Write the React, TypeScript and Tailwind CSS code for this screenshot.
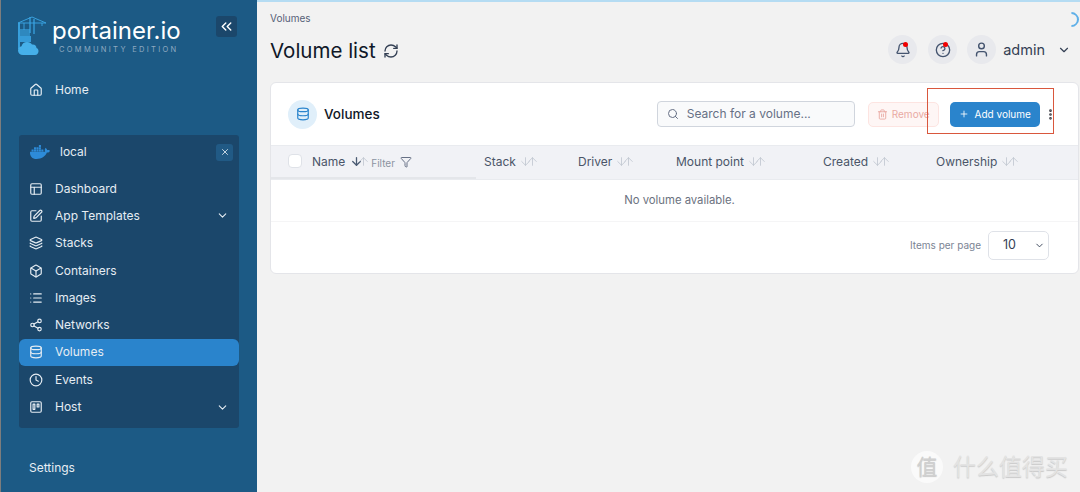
import React from "react";
import {
  ArrowDown,
  ArrowUp,
  Bell,
  Box,
  ChevronDown,
  ChevronsLeft,
  CircleHelp,
  Clock,
  Database,
  Filter,
  Home,
  Layers,
  List,
  MoreVertical,
  PanelsTopLeft,
  Plus,
  RefreshCw,
  Search,
  Share2,
  SquarePen,
  Trash2,
  Trello,
  User,
  X,
} from "lucide-react";
import { FaDocker } from "react-icons/fa";

const navItems = [
  { label: "Dashboard", icon: PanelsTopLeft },
  { label: "App Templates", icon: SquarePen, more: true },
  { label: "Stacks", icon: Layers },
  { label: "Containers", icon: Box },
  { label: "Images", icon: List },
  { label: "Networks", icon: Share2 },
  { label: "Volumes", icon: Database, active: true },
  { label: "Events", icon: Clock },
  { label: "Host", icon: Trello, more: true },
];

const columns = [
  { label: "Stack", width: "w-[94px]" },
  { label: "Driver", width: "w-[98px]" },
  { label: "Mount point", width: "w-[147px]" },
  { label: "Created", width: "w-[113px]" },
  { label: "Ownership", width: "w-[120px]" },
];

const Logo = () => (
  <svg width="34" height="40" viewBox="0 0 34 40" fill="none" className="shrink-0">
    <g stroke="#3ba7e6" strokeWidth="0.900">
      <path d="M0 7H28" />
      <path d="M14 1 0 7M14 1l14 6" />
      <path d="M12 1v16M16 3v15" strokeWidth="1.200" />
      <path d="M1 7v26" strokeWidth="1.800" />
      <path d="M6 7v7M24 7v3" />
    </g>
    <g fill="#3ba7e6">
      <rect x="2" y="13" width="10" height="7" opacity="0.6" />
      <rect x="2" y="20" width="11" height="6" opacity="0.85" />
    </g>
    <path
      d="M5 39c-3 0-5-2-5-4.500 0-2 1.500-3.800 3.500-4.200C4 27.500 6.500 26 9 26c2.500 0 4 1 5 2.500 2.700-.5 4.500 1.500 4.500 3.500 1.500.3 2 1.800 2 3.200 0 1.800-1.200 3.800-3.500 3.800Z"
      fill="#46b0ea"
    />
  </svg>
);

const SortArrows = ({ dark }: { dark?: boolean }) => (
  <span className={`flex items-center ${dark ? "ml-[5px]" : "ml-[3px]"}`}>
    <ArrowDown
      size={13}
      strokeWidth={dark ? 2.400 : 1.500}
      className={dark ? "-mr-[6px] text-[#4b5b73]" : "-mr-[6px] text-[#bfc5cf]"}
    />
    <ArrowUp size={13} strokeWidth={1.500} className="text-[#bfc5cf]" />
  </span>
);

const RoundIcon = ({ children, dot }: { children: React.ReactNode; dot?: boolean }) => (
  <div className="relative flex h-[29px] w-[29px] items-center justify-center rounded-full bg-[#e8e9ed] text-[#44546f]">
    {children}
    {dot && <span className="absolute right-[9px] top-[7px] h-[5px] w-[5px] rounded-full bg-[#f00000]" />}
  </div>
);

const Sidebar = () => (
  <aside className="flex h-[492px] w-[257px] shrink-0 flex-col border-l border-[#7d7d7d] bg-[#1c5a85] text-[#e6edf3]">
    <div className="flex h-[56px] items-start pl-[17px] pt-[16px]">
      <Logo />
      <div className="flex w-[130px] flex-col items-start">
        <span className="text-[24px] font-normal leading-[30px] text-white">portainer.io</span>
        <span className="ml-[7px] whitespace-nowrap text-[7.500px] leading-[8px] tracking-[2.300px] text-[#8ea9c0]">
          COMMUNITY EDITION
        </span>
      </div>
      <button className="ml-[34px] flex h-[21px] w-[21px] items-center justify-center rounded-[3px] bg-[#1b476b] text-white">
        <ChevronsLeft size={17} strokeWidth={2} />
      </button>
    </div>

    <div className="mt-[20px] flex h-[27px] items-center pl-[28px] text-[12px]">
      <Home size={14} className="mr-[12px]" />
      Home
    </div>

    <div className="ml-[18px] mt-[32px] w-[220px] rounded-[3px] bg-[#1b476b] pb-[7px]">
      <div className="flex h-[34px] items-center pl-[11px] pr-[6px] text-[12px]">
        <FaDocker size={20} className="text-[#2d8bd8]" />
        <span className="ml-[10px]">local</span>
        <span className="ml-auto flex h-[17px] w-[17px] items-center justify-center rounded-[3px] bg-[#215a85]">
          <X size={10} />
        </span>
      </div>
      <div className="mt-[6px]">
        {navItems.map((item) => (
          <div
            key={item.label}
            className={`flex h-[27.300px] items-center rounded-[6px] pl-[10px] pr-[10px] text-[12px] ${
              item.active ? "bg-[#2a84cc]" : ""
            }`}
          >
            <item.icon size={14} className="mr-[12px] shrink-0" />
            <span>{item.label}</span>
            {item.more && <ChevronDown size={13} className="ml-auto" />}
          </div>
        ))}
      </div>
    </div>

    <div className="ml-[28px] mt-[31px] text-[12px]">Settings</div>
  </aside>
);

const VolumesCard = () => (
  <div className="ml-[13px] mt-[15px] w-[809px] overflow-hidden rounded-[6px] border border-[#e4e5e9] bg-white">
    <div className="flex h-[62px] items-center pl-[17px]">
      <div className="flex h-[29px] w-[29px] items-center justify-center rounded-full bg-[#e0effa] text-[#2a84cc]">
        <Database size={14} />
      </div>
      <span className="ml-[7px] text-[13.500px] font-medium text-[#101828]">Volumes</span>
      <div className="ml-[277px] flex h-[26px] w-[198px] items-center rounded-[4px] border border-[#d0d5dd] bg-[#f9fafb] pl-[9px] text-[12px] text-[#667085]">
        <Search size={12} />
        <span className="ml-[8px]">Search for a volume...</span>
      </div>
      <button className="ml-[13px] flex h-[25px] w-[71px] items-center justify-center rounded-[5px] border border-[#fde4e1] bg-[#fef6f5] text-[10px] text-[#e9aaa3]">
        <Trash2 size={11} className="mr-[4px]" />
        Remove
      </button>
      <button className="ml-[11px] flex h-[25px] w-[90px] items-center justify-center rounded-[5px] bg-[#2a84cc] text-[10px] text-white">
        <Plus size={10} className="mr-[6px]" />
        Add volume
      </button>
      <MoreVertical size={13} strokeWidth={3} className="ml-[4px] text-[#3f3f46]" />
    </div>

    <div className="flex h-[35px] items-center border-y border-[#e9ebef] bg-[#f1f2f6] text-[12px] text-[#4a5568]">
      <div className="flex h-full w-[205px] shrink-0 items-center border-b-2 border-[#e4e6ea]">
        <span className="mb-[2px] ml-[17px] h-[14px] w-[14px] rounded-[4px] border border-[#dfe2e8] bg-white" />
        <span className="ml-[10px]">Name</span>
        <SortArrows dark />
        <span className="ml-[1px] mt-[3px] text-[10px] text-[#8b93a1]">Filter</span>
        <Filter size={12} className="ml-[5px] text-[#667085]" />
      </div>
      <span className="w-[8px]" />
      {columns.map((column) => (
        <div key={column.label} className={`flex items-center pb-[2px] ${column.width}`}>
          {column.label}
          <SortArrows />
        </div>
      ))}
    </div>

    <div className="flex h-[42px] items-center justify-center border-b border-[#f5f5f6] pl-[10px] text-[11.300px] text-[#6b7280]">
      No volume available.
    </div>

    <div className="flex h-[51px] items-center justify-end pb-[4px] pr-[29px] text-[10px] text-[#7b8494]">
      Items per page
      <div className="ml-[7px] flex h-[29px] w-[61px] items-center justify-between rounded-[5px] border border-[#dfe2e8] pl-[14px] pr-[3px] text-[12.500px] text-[#344054]">
        10
        <ChevronDown size={11} />
      </div>
    </div>
  </div>
);

export default function App() {
  return (
    <div
      className="relative flex h-[492px] w-[1080px] overflow-hidden bg-[#f2f2f2]"
      style={{ fontFamily: "Inter, 'Noto Sans CJK SC', sans-serif" }}
    >
      <Sidebar />
      <main className="min-w-0 flex-1 border-t-2 border-[#b5dcf3]">
        <div className="flex h-[65px]">
          <div className="pl-[13px]">
            <div className="pt-[9px] text-[10px] leading-[14px] text-[#566178]">Volumes</div>
            <div className="mt-[12px] flex items-center text-[20.500px] leading-[28px] text-[#101828]">
              Volume list
              <RefreshCw size={16} className="ml-[7px] text-[#344054]" />
            </div>
          </div>
          <div className="ml-auto mt-[33px] flex h-[29px] items-center pr-[9px]">
            <RoundIcon dot>
              <Bell size={16} />
            </RoundIcon>
            <span className="w-[11px]" />
            <RoundIcon dot>
              <CircleHelp size={16} />
            </RoundIcon>
            <span className="w-[10px]" />
            <RoundIcon>
              <User size={17} />
            </RoundIcon>
            <span className="ml-[7px] text-[14.500px] text-[#344054]">admin</span>
            <ChevronDown size={14} className="ml-[12px] text-[#344054]" />
          </div>
        </div>
        <VolumesCard />
      </main>

      {/* loading spinner, red annotation box and site watermark sit over the page */}
      <div className="absolute right-[1px] top-[12px] h-[15px] w-[15px] rotate-45 rounded-full border-2 border-transparent border-r-[#5fb0e8] border-t-[#5fb0e8]" />
      <div className="absolute left-[927px] top-[88px] h-[46px] w-[127px] border-[1.500px] border-[#d9573d]" />
      <div className="absolute left-[911px] top-[451px] flex items-center text-[#e3e3e3] [text-shadow:0_1px_1px_#c8c8c8]">
        <span className="flex h-[32px] w-[32px] items-center justify-center rounded-full bg-[#fafafa] text-[21px] text-[#d0d0d0]">
          值
        </span>
        <span className="ml-[10px] text-[23px] leading-[32px]">什么值得买</span>
      </div>
    </div>
  );
}
